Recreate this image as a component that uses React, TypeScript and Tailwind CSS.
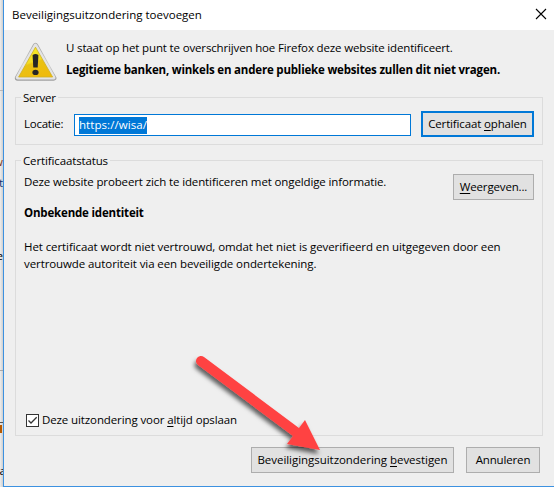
import type { ReactNode } from 'react';

function Key({ children }: { children: ReactNode }) {
  return <span className="underline decoration-1 underline-offset-[2px]">{children}</span>;
}

function WarningIcon() {
  return (
    <svg width="44" height="40" viewBox="0 0 44 40" className="shrink-0">
      <defs>
        <linearGradient id="rim" x1="0" y1="0" x2="0" y2="1">
          <stop offset="0" stopColor="#a8a8a8" />
          <stop offset="0.6" stopColor="#cccccc" />
          <stop offset="1" stopColor="#a0a0a0" />
        </linearGradient>
        <linearGradient id="sun" x1="0.1" y1="0" x2="0.5" y2="1">
          <stop offset="0" stopColor="#f6ee2c" />
          <stop offset="0.52" stopColor="#f3dc22" />
          <stop offset="0.58" stopColor="#e9c213" />
          <stop offset="1" stopColor="#efbb0c" />
        </linearGradient>
      </defs>
      <path d="M21.5 3.5 L39.7 36 H3.5 Z" fill="url(#rim)" stroke="url(#rim)" strokeWidth="5.4" strokeLinejoin="round" />
      <path d="M21.5 3.5 L39.7 35.6 H3.5 Z" fill="#e4e4e4" stroke="#e4e4e4" strokeWidth="3.6" strokeLinejoin="round" />
      <path d="M21.5 5.2 L38.6 35 H4.6 Z" fill="url(#sun)" stroke="#cfb023" strokeWidth="0.8" strokeLinejoin="round" />
      <path d="M18.6 13 Q21.5 11.2 24.4 13 L23.7 25.5 H19.3 Z" fill="#262626" />
      <ellipse cx="21.5" cy="30.4" rx="3.1" ry="2.7" fill="#262626" />
    </svg>
  );
}

function PushButton({ className, children }: { className: string; children: ReactNode }) {
  return (
    <button className={`flex shrink-0 items-center justify-center whitespace-nowrap bg-[#e1e1e1] ${className}`}>
      {children}
    </button>
  );
}

export default function App() {
  return (
    <div className="relative flex h-[487px] w-[554px] overflow-hidden bg-[#efefef] font-['Open_Sans','Noto_Sans',sans-serif] text-[11.5px] leading-4 text-black">
      <div className="relative w-[3px] shrink-0 overflow-hidden bg-gradient-to-r from-[#eeeeee] to-[#cfcfcf]">
        <span className="absolute top-[154px] right-0 text-[#8a3a10]">w</span>
        <span className="absolute top-[175px] right-0 text-[#10306b]">t</span>
        <span className="absolute top-[248px] right-0">e</span>
        <span className="absolute top-[90px] h-px w-full bg-[#b8b8b8]" />
        <span className="absolute top-[370px] h-px w-full bg-[#a8a8a8]" />
        <span className="absolute top-[422px] h-px w-full bg-[#555]" />
        <span className="absolute top-[425px] h-[8px] w-[2px] bg-[#b65a00]" />
        <span className="absolute top-[463px] -right-[3px]">a</span>
      </div>

      <div className="flex min-w-0 flex-1 flex-col border-b border-l border-[#3c91e0]">
        <header className="flex h-[30px] shrink-0 items-center justify-between bg-white pr-[7px] pl-[8px]">
          <span>Beveiligingsuitzondering toevoegen</span>
          <svg width="12" height="12" viewBox="0 0 12 12" className="mb-[2px]" stroke="#000" strokeWidth="1.1">
            <path d="M1 1 L11 11 M11 1 L1 11" />
          </svg>
        </header>

        <div className="flex h-[67px] shrink-0 pt-[12px] pl-[10px]">
          <WarningIcon />
          <div className="-mt-[2px] flex flex-col gap-[6px] whitespace-nowrap pl-[8px]">
            <p className="tracking-[-0.15px]">U staat op het punt te overschrijven hoe Firefox deze website identificeert.</p>
            <p className="font-bold tracking-[-0.19px]">Legitieme banken, winkels en andere publieke websites zullen dit niet vragen.</p>
          </div>
        </div>

        <section className="mr-[11px] ml-[11px] flex h-[48px] shrink-0 flex-col border border-[#dcdcdc]">
          <h2 className="-mt-[8px] ml-[5px] h-[16px] self-start bg-[#efefef] px-[2px] tracking-[-0.3px]">Server</h2>
          <div className="flex items-start pt-[5px] pr-[8px] pl-[8px]">
            <span className="mt-[5px] w-[50px] tracking-[-0.25px]">Locatie:</span>
            <div className="mt-[3px] flex h-[22px] w-[337px] items-center border border-[#0078d7] bg-white pl-[4px]">
              <span className="h-[17px] bg-[#0078d7] tracking-[0.06px] text-white">https://wisa/</span>
            </div>
            <PushButton className="ml-auto h-[26px] w-[113px] border-2 border-[#0078d7] tracking-[-0.15px]">
              <span>Certificaat <Key>o</Key>phalen</span>
            </PushButton>
          </div>
        </section>

        <section className="mt-[15px] mr-[11px] ml-[11px] flex h-[276px] shrink-0 flex-col border border-[#dcdcdc]">
          <h2 className="-mt-[8px] ml-[5px] h-[16px] self-start bg-[#efefef] px-[2px] tracking-[-0.13px]">Certificaatstatus</h2>
          <div className="flex h-[36px] justify-between pt-[5px] pr-[8px] pl-[8px]">
            <p className="whitespace-nowrap tracking-[-0.12px]">Deze website probeert zich te identificeren met ongeldige informatie.</p>
            <PushButton className="h-[26px] w-[81px] border border-[#adadad] tracking-[-0.15px]">
              <span><Key>W</Key>eergeven...</span>
            </PushButton>
          </div>
          <p className="pl-[8px] font-bold tracking-[-0.18px]">Onbekende identiteit</p>
          <div className="mt-[17px] whitespace-nowrap pl-[8px] leading-[17px] tracking-[-0.09px]">
            <p>Het certificaat wordt niet vertrouwd, omdat het niet is geverifieerd en uitgegeven door een</p>
            <p>vertrouwde autoriteit via een beveiligde ondertekening.</p>
          </div>
          <label className="mt-auto mb-[7px] flex items-center gap-[3px] pl-[10px]">
            <span className="flex h-[13px] w-[13px] items-center justify-center border border-[#333] bg-white">
              <svg width="11" height="11" viewBox="0 0 11 11" fill="none" stroke="#333" strokeWidth="1.3">
                <path d="M1.5 5.5 L4 8 L9.7 2.3" />
              </svg>
            </span>
            <span className="tracking-[-0.11px]">Deze uitzondering voor <Key>a</Key>ltijd opslaan</span>
          </label>
        </section>

        <footer className="mt-[11px] flex justify-end gap-[12px] pr-[14px]">
          <PushButton className="h-[26px] w-[203px] border border-[#adadad] tracking-[-0.04px]">
            <span>Beveiligingsuitzondering <Key>b</Key>evestigen</span>
          </PushButton>
          <PushButton className="h-[26px] w-[74px] border border-[#adadad] tracking-[-0.15px]">Annuleren</PushButton>
        </footer>
      </div>

      <svg width="150" height="120" viewBox="190 350 150 120" className="pointer-events-none absolute top-[350px] left-[190px]">
        <defs>
          <filter id="soft" x="-20%" y="-20%" width="150%" height="150%">
            <feDropShadow dx="-1.5" dy="4" stdDeviation="2.2" floodColor="#000" floodOpacity="0.6" />
          </filter>
        </defs>
        <g filter="url(#soft)" fill="#ff4343">
          <path d="M201 361 L300 435" stroke="#ff4343" strokeWidth="10" strokeLinecap="round" />
          <path d="M305 420 L320 450 L287 444 Z" />
        </g>
      </svg>
    </div>
  );
}
